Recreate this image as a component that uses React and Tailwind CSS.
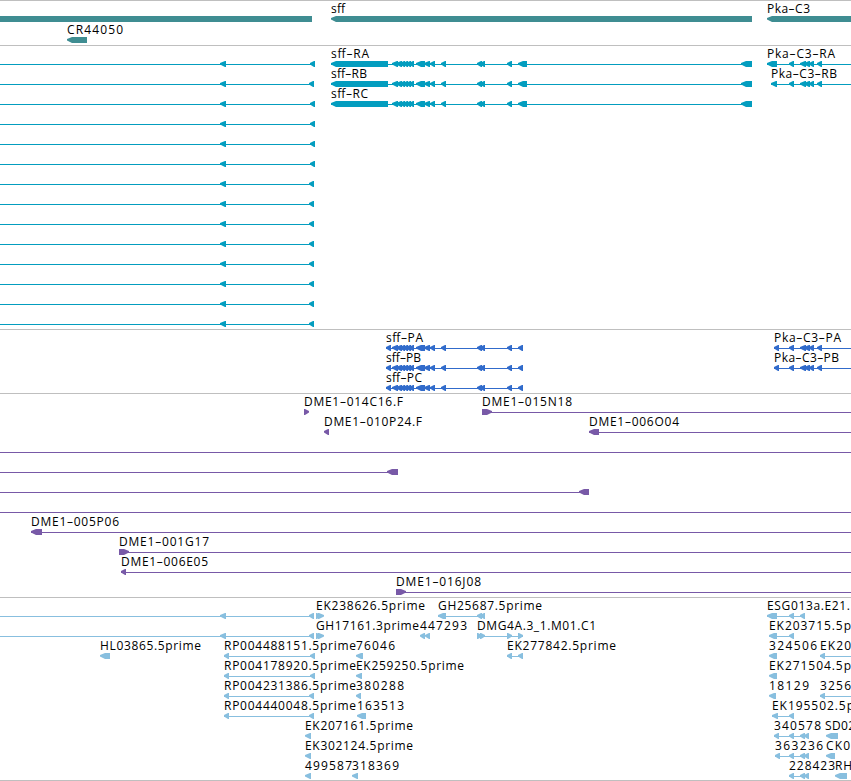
import React from "react";

const FONT = '"Open Sans", "Noto Sans", sans-serif';

// exons: [start, end], drawn as arrows pointing along the strand
const sffCoding = [
  [392, 398], [396, 402], [400, 405], [403, 408], [406, 411], [409, 414],
  [416, 425], [424, 430], [430, 435], [441, 446],
  [477, 482], [480, 485], [507, 512],
];
const pkaShared = [
  [789, 794], [800, 806], [804, 810], [809, 814], [817, 822],
];

const leftTranscripts = [
  315, 314, 315, 315, 315, 315, 314, 314, 314, 314, 314, 314, 314, 314,
].map((end, row) => ({
  row,
  line: [0, end],
  exons: [[220, 226], [end - 5, end]],
}));

const tracks = [
  {
    id: "genes",
    color: "#3f8d92",
    height: 45,
    rowHeight: 21,
    features: [
      { row: 0, bars: [[0, 312]] },
      { row: 0, label: "sff", x: 331, w: 14, exons: [[331, 752]] },
      { row: 0, label: "Pka-C3", x: 767, w: 43, exons: [[767, 860]] },
      { row: 1, label: "CR44050", x: 67, w: 56, exons: [[67, 87]] },
    ],
  },
  {
    id: "transcripts",
    color: "#039dbf",
    height: 284,
    features: [
      ...leftTranscripts,
      ...["sff-RA", "sff-RB", "sff-RC"].map((label, row) => ({
        row,
        label,
        x: 331,
        w: [38, 36, 37][row],
        line: [331, 752],
        exons: [[331, 388], ...sffCoding, [518, 527], [741, 752]],
      })),
      { row: 0, label: "Pka-C3-RA", x: 767, w: 68, line: [767, 851], exons: [[767, 777], ...pkaShared] },
      { row: 1, label: "Pka-C3-RB", x: 771, w: 66, line: [771, 851], exons: [[771, 777], ...pkaShared] },
    ],
  },
  {
    id: "proteins",
    color: "#316bcb",
    height: 64,
    features: [
      ...["sff-PA", "sff-PB", "sff-PC"].map((label, row) => ({
        row,
        label,
        x: 386,
        w: [37, 35, 36][row],
        line: [386, 523],
        exons: [[386, 391], ...sffCoding, [518, 523]],
      })),
      ...["Pka-C3-PA", "Pka-C3-PB"].map((label, row) => ({
        row,
        label,
        x: 774,
        w: [67, 65][row],
        line: [774, 851],
        exons: [[774, 779], ...pkaShared],
      })),
    ],
  },
  {
    id: "clones",
    color: "#7859a7",
    height: 204,
    features: [
      { row: 0, label: "DME1-014C16.F", x: 304, w: 99, forward: true, exons: [[304, 309]] },
      { row: 0, label: "DME1-015N18", x: 482, w: 90, forward: true, line: [482, 851], exons: [[482, 492]] },
      { row: 1, label: "DME1-010P24.F", x: 324, w: 98, exons: [[324, 329]] },
      { row: 1, label: "DME1-006O04", x: 589, w: 90, line: [589, 851], exons: [[589, 599]] },
      { row: 2, line: [0, 851] },
      { row: 3, line: [0, 398], exons: [[387, 398]] },
      { row: 4, line: [0, 589], exons: [[579, 589]] },
      { row: 5, line: [0, 851] },
      { row: 6, label: "DME1-005P06", x: 31, w: 88, line: [31, 851], exons: [[31, 42]] },
      { row: 7, label: "DME1-001G17", x: 119, w: 90, forward: true, line: [119, 851], exons: [[119, 129]] },
      { row: 8, label: "DME1-006E05", x: 121, w: 87, line: [121, 851], exons: [[121, 126]] },
      { row: 9, label: "DME1-016J08", x: 396, w: 85, forward: true, line: [396, 851], exons: [[396, 406]] },
    ],
  },
  {
    id: "ests",
    color: "#88bfdf",
    height: 183,
    features: [
      { row: 0, line: [0, 314], exons: [[220, 226], [309, 314]] },
      { row: 0, label: "EK238626.5prime", x: 316, w: 109, forward: true, exons: [[316, 321], [318, 324]] },
      { row: 0, label: "GH25687.5prime", x: 438, w: 104, line: [438, 485], exons: [[438, 446], [477, 482], [480, 485]] },
      { row: 0, label: "ESG013a.E21.", x: 767, w: 83, line: [767, 805], exons: [[767, 777], [789, 794], [800, 805]] },
      { row: 1, line: [0, 314], exons: [[220, 226], [309, 314]] },
      { row: 1, label: "GH17161.3prime", x: 316, w: 103, forward: true, exons: [[316, 321], [318, 324]] },
      { row: 1, label: "447293", x: 420, w: 47, exons: [[420, 425], [425, 430]] },
      { row: 1, label: "DMG4A.3_1.M01.C1", x: 477, w: 119, forward: true, line: [477, 523], exons: [[477, 482], [480, 485], [507, 512], [518, 523]] },
      { row: 1, label: "EK203715.5p", x: 769, w: 82, line: [769, 794], exons: [[769, 777], [789, 794]] },
      { row: 2, label: "HL03865.5prime", x: 100, w: 101, exons: [[100, 110]] },
      { row: 2, label: "RP004488151.5prime", x: 224, w: 132, line: [224, 315], exons: [[224, 229], [310, 315]] },
      { row: 2, label: "76046", x: 356, w: 39, exons: [[356, 363]] },
      { row: 2, label: "EK277842.5prime", x: 507, w: 109, line: [507, 523], exons: [[507, 512], [518, 523]] },
      { row: 2, label: "324506", x: 769, w: 48, exons: [[769, 777]] },
      { row: 2, label: "EK20", x: 820, w: 31, line: [820, 851], exons: [[820, 825]] },
      { row: 3, label: "RP004178920.5prime", x: 224, w: 132, line: [224, 315], exons: [[224, 229], [310, 315]] },
      { row: 3, label: "EK259250.5prime", x: 356, w: 108, exons: [[356, 362]] },
      { row: 3, label: "EK271504.5p", x: 769, w: 82, exons: [[769, 777]] },
      { row: 4, label: "RP004231386.5prime", x: 224, w: 132, line: [224, 314], exons: [[224, 229], [309, 314]] },
      { row: 4, label: "380288", x: 356, w: 48, exons: [[356, 361]] },
      { row: 4, label: "18129", x: 769, w: 40, exons: [[769, 776]] },
      { row: 4, label: "3256", x: 820, w: 31, line: [820, 851], exons: [[820, 825]] },
      { row: 5, label: "RP004440048.5prime", x: 224, w: 132, line: [224, 314], exons: [[224, 229], [309, 314]] },
      { row: 5, label: "163513", x: 357, w: 47, exons: [[357, 366]] },
      { row: 5, label: "EK195502.5p", x: 772, w: 82, line: [772, 794], exons: [[772, 778], [789, 794]] },
      { row: 6, label: "EK207161.5prime", x: 305, w: 108, exons: [[305, 311]] },
      { row: 6, label: "340578", x: 774, w: 47, line: [774, 809], exons: [[774, 779], [789, 794], [800, 805], [804, 809]] },
      { row: 6, label: "SD02", x: 825, w: 30, exons: [[826, 838]] },
      { row: 7, label: "EK302124.5prime", x: 305, w: 108, exons: [[305, 311]] },
      { row: 7, label: "363236", x: 775, w: 48, line: [775, 809], exons: [[775, 780], [789, 794], [800, 805], [804, 809]] },
      { row: 7, label: "CK0", x: 826, w: 24, exons: [[826, 835]] },
      { row: 8, label: "499587", x: 305, w: 47, exons: [[305, 311]] },
      { row: 8, label: "318369", x: 352, w: 47, exons: [[352, 358]] },
      { row: 8, label: "228423", x: 789, w: 46, line: [789, 809], exons: [[789, 794], [800, 805], [804, 809]] },
      { row: 8, label: "RH", x: 835, w: 17, exons: [[835, 847]] },
    ],
  },
];

const arrowPoints = (start, end, top, forward) => {
  const head = Math.min(5, end - start - 1);
  const bottom = top + 6;
  // the tip is one pixel tall so it joins the intron line
  const tipTop = top + 2;
  const tipBottom = top + 3.6;
  if (forward) {
    const s = end - head;
    return `${start},${top} ${s},${top} ${end},${tipTop} ${end},${tipBottom} ${s},${bottom} ${start},${bottom}`;
  }
  const s = start + head;
  return `${start},${tipTop} ${s},${top} ${end},${top} ${end},${bottom} ${s},${bottom} ${start},${tipBottom}`;
};

const Feature = ({ feature, color, rowHeight }) => {
  const { row, label, x, w, line, bars = [], exons = [], forward } = feature;
  const base = 12 + row * rowHeight;

  return (
    <g fill={color}>
      {line && (
        <rect x={line[0]} y={base + 6} width={line[1] - line[0]} height="1" />
      )}
      {bars.map(([start, end]) => (
        <rect key={start} x={start} y={base + 3} width={end - start} height="6" />
      ))}
      {exons.map(([start, end]) => (
        <polygon key={start} points={arrowPoints(start, end, base + 3, forward)} />
      ))}
      {label && (
        <text
          x={x}
          y={base}
          textLength={w}
          fill="#000"
          fontFamily={FONT}
          fontSize="12"
        >
          {label.replaceAll("-", "\u2013")}
        </text>
      )}
    </g>
  );
};

const Track = ({ track }) => (
  <section
    className="w-full border-t border-[#bfbfbf] overflow-hidden"
    style={{ height: track.height }}
  >
    <svg width="851" height={track.height - 1} className="block">
      {track.features.map((feature, i) => (
        <Feature
          key={i}
          feature={feature}
          color={track.color}
          rowHeight={track.rowHeight || 20}
        />
      ))}
    </svg>
  </section>
);

const App = () => {
  return (
    <main className="flex flex-col w-[851px] h-[781px] bg-white border-b border-[#bfbfbf] overflow-hidden">
      {tracks.map((track) => (
        <Track key={track.id} track={track} />
      ))}
    </main>
  );
};

export default App;
